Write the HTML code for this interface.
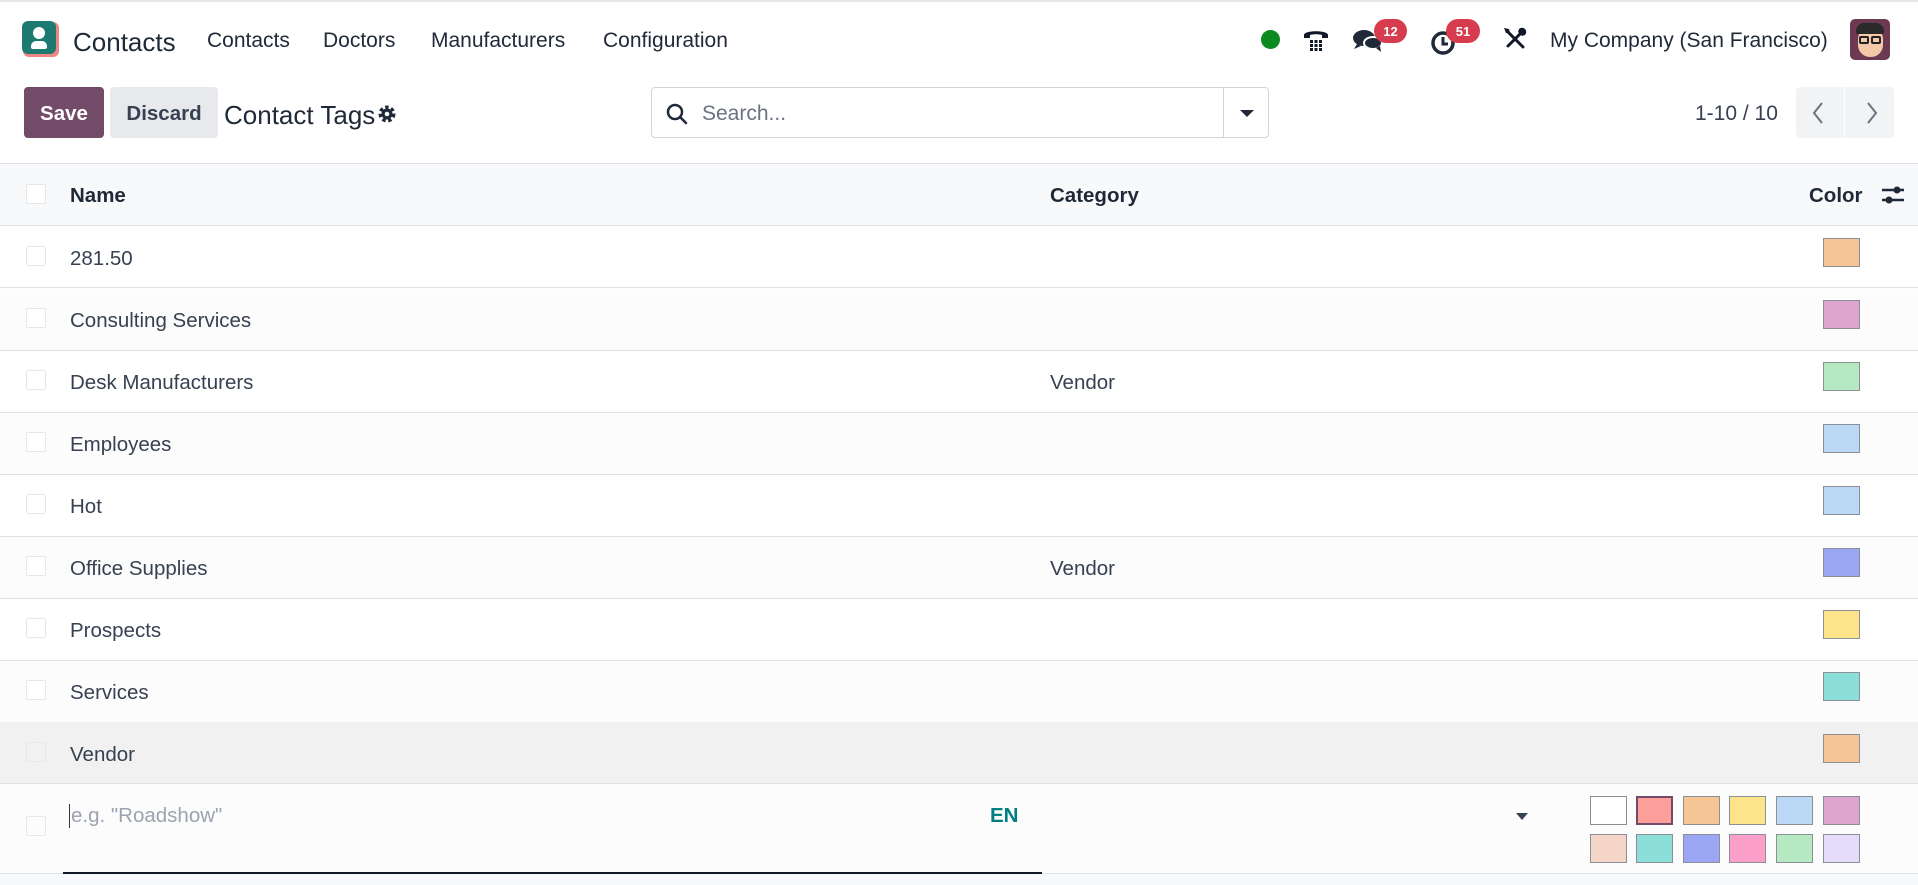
<!DOCTYPE html>
<html><head><meta charset="utf-8"><style>
*{box-sizing:border-box;margin:0;padding:0}
body{width:1918px;height:885px;overflow:hidden;background:#fff;font-family:"Liberation Sans",sans-serif;color:#374151;position:relative}
.a{position:absolute}
.nav{top:0;left:0;width:1918px;height:78px;border-top:2px solid #e5e7eb}
.menu{font-size:21px;color:#1f2937;top:29px}
.btn{top:87px;height:51px;border-radius:4px;font-size:20.5px;font-weight:bold;display:flex;align-items:center;justify-content:center;padding-top:3px}
.row{left:0;width:1918px;height:62px;border-bottom:1px solid #dee2e6}
.cb{left:26px;width:20px;height:20px;border:1px solid #e5e7eb;background:#fff;border-radius:2px}
.tx{font-size:20.5px;color:#374151;margin-top:1px}
.sw{width:37px;height:29px;border:1px solid #8a8f98}
.badge{background:#d63c4d;color:#fff;font-size:13px;font-weight:bold;border-radius:12px;height:24px;display:flex;align-items:center;justify-content:center}
.th{font-size:20.5px;font-weight:bold;color:#1f2937;top:184px}
</style></head><body>
<div class="a nav"></div>
<div class="a" style="left:23px;top:22px;width:36px;height:35px;border-radius:6px;background:#f08585"></div>
<div class="a" style="left:22px;top:21px;width:34px;height:33px;border-radius:6px;background:#1d7a70"></div>
<div class="a" style="left:33px;top:27px;width:12px;height:12px;border-radius:50%;background:#fff"></div>
<div class="a" style="left:31px;top:41px;width:16px;height:8px;border-radius:5px 5px 2px 2px;background:#fff"></div>
<div class="a menu" style="left:73px;top:27px;font-size:26px">Contacts</div>
<div class="a menu" style="left:207px">Contacts</div>
<div class="a menu" style="left:323px">Doctors</div>
<div class="a menu" style="left:431px">Manufacturers</div>
<div class="a menu" style="left:603px">Configuration</div>
<div class="a" style="left:1261px;top:30px;width:19px;height:19px;border-radius:50%;background:#0a8a1f"></div>
<svg class="a" style="left:1302px;top:25px" width="28" height="28" viewBox="0 0 28 28"><path d="M2 10c0-5 24-5 24 0v3h-6v-3c-3-1-9-1-12 0v3H2z" fill="#111827"/><g fill="#111827"><rect x="8" y="15" width="3" height="3"/><rect x="12.5" y="15" width="3" height="3"/><rect x="17" y="15" width="3" height="3"/><rect x="8" y="19" width="3" height="3"/><rect x="12.5" y="19" width="3" height="3"/><rect x="17" y="19" width="3" height="3"/><rect x="8" y="23" width="3" height="3"/><rect x="12.5" y="23" width="3" height="3"/><rect x="17" y="23" width="3" height="3"/></g></svg>
<svg class="a" style="left:1352px;top:27px" width="32" height="28" viewBox="0 0 32 28"><ellipse cx="12" cy="11" rx="11" ry="8" fill="#1f2937"/><path d="M5 17l-3 5 7-3z" fill="#1f2937"/><ellipse cx="21" cy="16" rx="9" ry="6" fill="#1f2937" stroke="#fff" stroke-width="2"/><path d="M24 21l5 4-1-6z" fill="#1f2937"/></svg>
<div class="a badge" style="left:1374px;top:19px;width:33px">12</div>
<svg class="a" style="left:1430px;top:28px" width="28" height="28" viewBox="0 0 28 28"><circle cx="13" cy="15" r="10" fill="none" stroke="#1f2937" stroke-width="3.5"/><path d="M13 9v7h5" fill="none" stroke="#1f2937" stroke-width="3"/></svg>
<div class="a badge" style="left:1446px;top:19px;width:34px">51</div>
<svg class="a" style="left:1502px;top:26px" width="26" height="26" viewBox="0 0 26 26"><path d="M5 5l16 16" stroke="#111827" stroke-width="3" stroke-linecap="round"/><path d="M20 6L6 20" stroke="#111827" stroke-width="3" stroke-linecap="round"/><path d="M2 2l5 1 1 4-4 0z" fill="#111827"/><path d="M17 3a4 4 0 0 1 6 6l-3 1-4-4z" fill="#111827"/></svg>
<div class="a menu" style="left:1550px">My Company (San Francisco)</div>
<div class="a" style="left:1850px;top:19px;width:40px;height:41px;border-radius:5px;background:#6b3a52;overflow:hidden">
<div class="a" style="left:8px;top:8px;width:25px;height:30px;border-radius:12px;background:#f3c9a8"></div>
<div class="a" style="left:6px;top:4px;width:28px;height:11px;border-radius:8px 8px 2px 2px;background:#2a2a2a"></div>
<div class="a" style="left:9px;top:17px;width:10px;height:8px;border:2px solid #222;border-radius:2px"></div>
<div class="a" style="left:21px;top:17px;width:10px;height:8px;border:2px solid #222;border-radius:2px"></div></div>

<div class="a btn" style="left:24px;width:80px;background:#714b67;color:#fff">Save</div>
<div class="a btn" style="left:110px;width:108px;background:#e7e9ed;color:#374151">Discard</div>
<div class="a" style="left:224px;top:100px;font-size:26px;color:#1f2937">Contact Tags</div>
<svg class="a" style="left:377px;top:104px" width="20" height="20" viewBox="0 0 20 20"><circle cx="10" cy="10" r="6" fill="none" stroke="#1f2937" stroke-width="5" stroke-dasharray="3 2.3"/><circle cx="10" cy="10" r="5.5" fill="#1f2937"/><circle cx="10" cy="10" r="2.3" fill="#fff"/></svg>
<div class="a" style="left:651px;top:87px;width:618px;height:51px;border:1px solid #d1d5db;border-radius:4px"></div>
<div class="a" style="left:1223px;top:88px;width:1px;height:49px;background:#d1d5db"></div>
<svg class="a" style="left:665px;top:102px" width="24" height="24" viewBox="0 0 24 24"><circle cx="10" cy="10" r="7" fill="none" stroke="#1f2937" stroke-width="2.5"/><path d="M15 15l6 6" stroke="#1f2937" stroke-width="2.5" stroke-linecap="round"/></svg>
<div class="a" style="left:702px;top:102px;font-size:21px;color:#6b7280">Search...</div>
<div class="a" style="left:1240px;top:110px;border:7px solid transparent;border-top:7px solid #1f2937;border-bottom:0"></div>
<div class="a" style="left:1695px;top:102px;font-size:21px;color:#374151">1-10 / 10</div>
<div class="a" style="left:1796px;top:87px;width:98px;height:51px;background:#f2f3f5;border-radius:4px"></div>
<div class="a" style="left:1844px;top:87px;width:1px;height:51px;background:#fff"></div>
<svg class="a" style="left:1810px;top:100px" width="70" height="26" viewBox="0 0 70 26"><path d="M12 3L4 13l8 10M58 3l8 10-8 10" fill="none" stroke="#6b7280" stroke-width="2"/></svg>

<div class="a" style="left:0;top:163px;width:1918px;height:63px;background:#f8f9fa;border-top:1px solid #dee2e6;border-bottom:1px solid #dee2e6"></div>
<div class="a cb" style="top:184px"></div>
<div class="a th" style="left:70px">Name</div>
<div class="a th" style="left:1050px">Category</div>
<div class="a th" style="left:1809px">Color</div>
<svg class="a" style="left:1880px;top:184px" width="26" height="22" viewBox="0 0 26 22"><path d="M2 6h22M2 16h22" stroke="#1f2937" stroke-width="2.5"/><circle cx="17" cy="6" r="3.5" fill="#1f2937"/><circle cx="9" cy="16" r="3.5" fill="#1f2937"/></svg>

<div class="a row" style="top:226px"></div>
<div class="a cb" style="top:246px"></div><div class="a tx" style="left:70px;top:246px">281.50</div><div class="a sw" style="left:1823px;top:238px;background:#f5c595"></div>
<div class="a row" style="top:289px;background:#fcfcfd"></div>
<div class="a cb" style="top:308px"></div><div class="a tx" style="left:70px;top:308px">Consulting Services</div><div class="a sw" style="left:1823px;top:300px;background:#dca6cf"></div>
<div class="a row" style="top:351px"></div>
<div class="a cb" style="top:370px"></div><div class="a tx" style="left:70px;top:370px">Desk Manufacturers</div><div class="a tx" style="left:1050px;top:370px">Vendor</div><div class="a sw" style="left:1823px;top:362px;background:#b6e9c1"></div>
<div class="a row" style="top:413px;background:#fcfcfd"></div>
<div class="a cb" style="top:432px"></div><div class="a tx" style="left:70px;top:432px">Employees</div><div class="a sw" style="left:1823px;top:424px;background:#bcd8f7"></div>
<div class="a row" style="top:475px"></div>
<div class="a cb" style="top:494px"></div><div class="a tx" style="left:70px;top:494px">Hot</div><div class="a sw" style="left:1823px;top:486px;background:#bcd8f7"></div>
<div class="a row" style="top:537px;background:#fcfcfd"></div>
<div class="a cb" style="top:556px"></div><div class="a tx" style="left:70px;top:556px">Office Supplies</div><div class="a tx" style="left:1050px;top:556px">Vendor</div><div class="a sw" style="left:1823px;top:548px;background:#9ba6f5"></div>
<div class="a row" style="top:599px"></div>
<div class="a cb" style="top:618px"></div><div class="a tx" style="left:70px;top:618px">Prospects</div><div class="a sw" style="left:1823px;top:610px;background:#fde38a"></div>
<div class="a row" style="top:661px;background:#fcfcfd"></div>
<div class="a cb" style="top:680px"></div><div class="a tx" style="left:70px;top:680px">Services</div><div class="a sw" style="left:1823px;top:672px;background:#8cded9"></div>
<div class="a row" style="top:722px;background:#f1f1f1"></div>
<div class="a cb" style="top:742px;background:#f1f1f1"></div><div class="a tx" style="left:70px;top:742px">Vendor</div><div class="a sw" style="left:1823px;top:734px;background:#f5c595"></div>

<div class="a" style="left:0;top:784px;width:1918px;height:90px;background:#fcfcfc;border-bottom:1px solid #dee2e6"></div>
<div class="a cb" style="top:816px;background:#fcfcfc"></div>
<div class="a" style="left:69px;top:804px;width:1px;height:24px;background:#333"></div>
<div class="a" style="left:71px;top:804px;font-size:20.5px;color:#9ca3af">e.g. "Roadshow"</div>
<div class="a" style="left:990px;top:804px;font-size:20.5px;font-weight:bold;color:#017e84">EN</div>
<div class="a" style="left:63px;top:872px;width:979px;height:2px;background:#111827"></div>
<div class="a" style="left:1516px;top:813px;border:6px solid transparent;border-top:7px solid #374151;border-bottom:0"></div>
<div class="a sw" style="left:1590px;top:796px;background:#fff"></div>
<div class="a sw" style="left:1636px;top:796px;background:#fc9f9a;border:2px solid #714b67"></div>
<div class="a sw" style="left:1683px;top:796px;background:#f5c595"></div>
<div class="a sw" style="left:1729px;top:796px;background:#fde38a"></div>
<div class="a sw" style="left:1776px;top:796px;background:#bcd8f7"></div>
<div class="a sw" style="left:1823px;top:796px;background:#dca6cf"></div>
<div class="a sw" style="left:1590px;top:834px;background:#f6d5c9"></div>
<div class="a sw" style="left:1636px;top:834px;background:#8cded9"></div>
<div class="a sw" style="left:1683px;top:834px;background:#9ba6f5"></div>
<div class="a sw" style="left:1729px;top:834px;background:#fd9fcb"></div>
<div class="a sw" style="left:1776px;top:834px;background:#b6e9c1"></div>
<div class="a sw" style="left:1823px;top:834px;background:#e5dcfb"></div>
<div class="a" style="left:0;top:874px;width:1918px;height:11px;background:#f8f9fa"></div>
</body></html>
